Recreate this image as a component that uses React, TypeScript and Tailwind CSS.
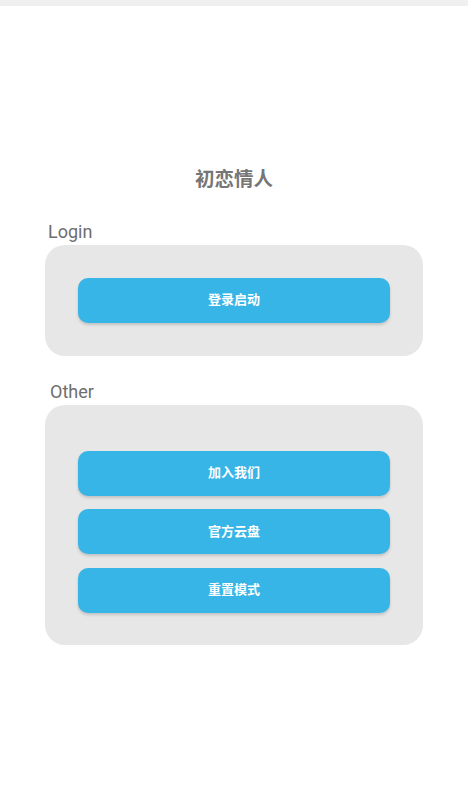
import React from "react";

const FONT = { fontFamily: 'Roboto, "Noto Sans CJK SC", sans-serif' };

function ActionButton({ label }: { label: string }) {
  return (
    <button
      className="h-[45px] w-full rounded-[10px] bg-[#36b5e6] text-[13px] font-semibold text-white shadow-[0_2px_3px_rgba(0,0,0,0.16)]"
      style={FONT}
    >
      {label}
    </button>
  );
}

export default function App() {
  return (
    <div className="h-[807px] w-full overflow-hidden bg-white" style={FONT}>
      <div className="h-[6px] bg-[#f0f0f0]" />

      <h1 className="mt-[164px] text-center text-[19.5px] font-semibold leading-none text-[#767676]">
        初恋情人
      </h1>

      <div className="px-[45px]">
        {/* Login */}
        <div className="mt-[33px] mb-[4px] pl-[3px] text-[18px] leading-none text-[#6e6e6e]">
          Login
        </div>
        <div className="rounded-[20px] bg-[#e7e7e7] px-[33px] py-[33px]">
          <ActionButton label="登录启动" />
        </div>

        {/* Other */}
        <div className="mt-[27px] mb-[4px] pl-[5px] text-[18px] leading-none text-[#6e6e6e]">
          Other
        </div>
        <div className="flex flex-col gap-[13.5px] rounded-[20px] bg-[#e7e7e7] px-[33px] pt-[46px] pb-[32px]">
          <ActionButton label="加入我们" />
          <ActionButton label="官方云盘" />
          <ActionButton label="重置模式" />
        </div>
      </div>
    </div>
  );
}
